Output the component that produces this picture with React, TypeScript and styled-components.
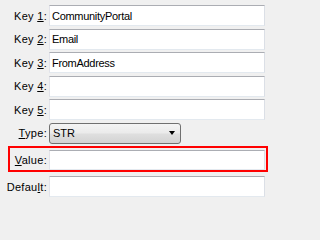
import React from "react";
import styled, { createGlobalStyle } from "styled-components";

const GlobalStyle = createGlobalStyle`
  html, body {
    margin: 0;
    padding: 0;
    background: #f0f0f0;
  }
  body {
    font-family: "Liberation Sans", Arial, sans-serif;
    font-size: 11px;
    color: #000;
  }
`;

const Form = styled.div`
  display: flex;
  flex-direction: column;
  gap: 2.5px;
  padding: 5px 5px 0 0;
  width: 270px;
  height: 201px;
  box-sizing: border-box;
`;

const Row = styled.div`
  display: flex;
  align-items: center;
  height: 21px;
`;

const Highlight = styled.div`
  display: flex;
  align-items: center;
  margin: 0 -3px 1.5px 8px;
  padding: 2px 1px 0 0;
  border: 2px solid #ff0000;
  height: 20px;
`;

const Label = styled.label<{ $width?: number }>`
  flex: none;
  width: ${(p) => p.$width ?? 49}px;
  padding-right: 2px;
  box-sizing: border-box;
  text-align: right;
  white-space: nowrap;
  letter-spacing: 0.3px;
`;

const Key = styled.u`
  text-decoration: underline;
  text-underline-offset: 1px;
`;

const Field = styled.div`
  flex: 1;
  height: 100%;
  box-sizing: border-box;
  background: #fff;
  border: 1px solid;
  border-color: #abadb3 #dbdfe6 #e3e9ef #e2e3ea;
  padding: 0 2px;
  display: flex;
  align-items: center;
  white-space: nowrap;
  overflow: hidden;
  letter-spacing: -0.3px;
`;

const Select = styled.div`
  width: 132px;
  height: 21px;
  box-sizing: border-box;
  border: 1px solid #707070;
  border-radius: 3px;
  background: linear-gradient(#f4f4f4 0%, #ebebeb 45%, #dedede 55%, #d3d3d3 100%);
  display: flex;
  align-items: center;
  justify-content: space-between;
  padding: 0 5px 0 3px;
`;

const Arrow = styled.span`
  width: 0;
  height: 0;
  border-left: 3.5px solid transparent;
  border-right: 3.5px solid transparent;
  border-top: 4px solid #000;
`;

const keys = ["CommunityPortal", "Email", "FromAddress", "", ""];

export default function App() {
  return (
    <>
      <GlobalStyle />
      <Form>
        {keys.map((value, i) => (
          <Row key={i}>
            <Label>
              Key <Key>{i + 1}</Key>:
            </Label>
            <Field>{value}</Field>
          </Row>
        ))}
        <Row>
          <Label>
            <Key>T</Key>ype:
          </Label>
          <Select>
            STR
            <Arrow />
          </Select>
        </Row>
        <Highlight>
          <Label $width={39}>
            <Key>V</Key>alue:
          </Label>
          <Field />
        </Highlight>
        <Row>
          <Label>
            Defau<Key>l</Key>t:
          </Label>
          <Field />
        </Row>
      </Form>
    </>
  );
}
